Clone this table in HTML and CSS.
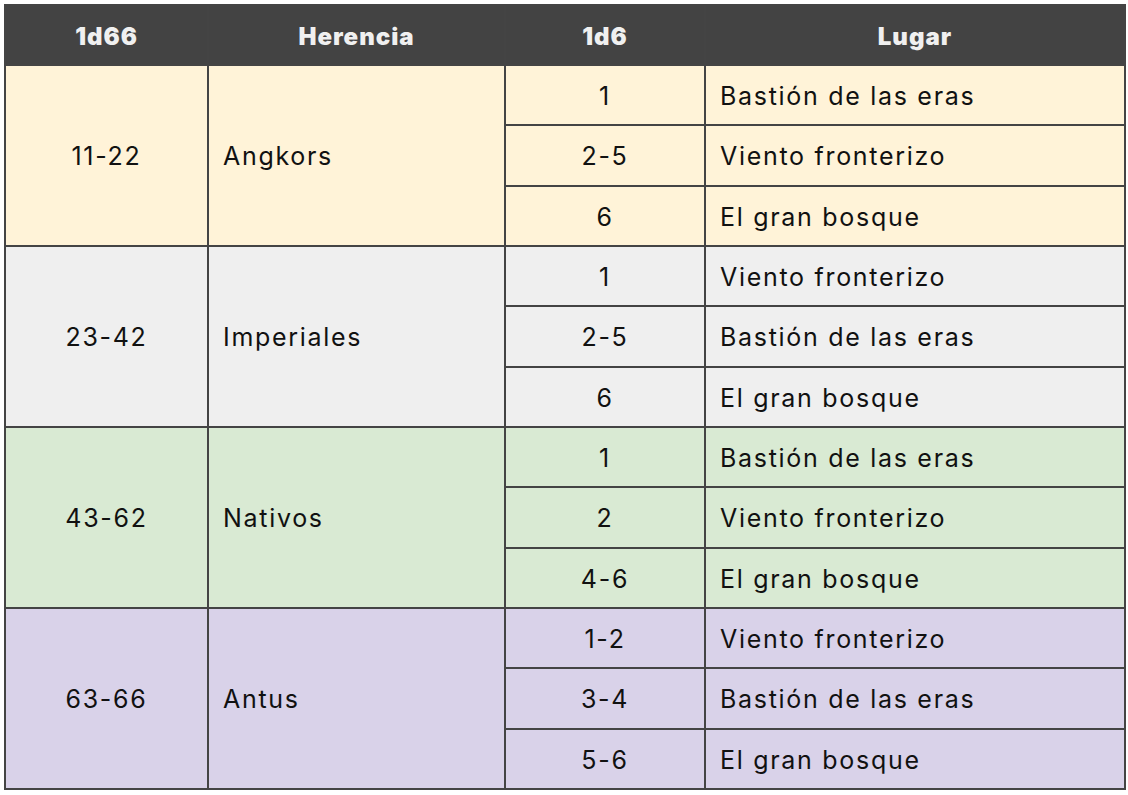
FILE: index.html
```html
<!DOCTYPE html>
<html lang="es">
<head>
<meta charset="utf-8">
<title>Herencia</title>
<link rel="stylesheet" href="styles.css">
</head>
<body>
<div class="wrap">
<table class="tbl">
  <colgroup>
    <col class="c1"><col class="c2"><col class="c3"><col class="c4">
  </colgroup>
  <thead>
    <tr><th>1d66</th><th>Herencia</th><th>1d6</th><th>Lugar</th></tr>
  </thead>
  <tbody class="g-yellow">
    <tr><td class="ctr" rowspan="3">11-22</td><td class="lft" rowspan="3">Angkors</td><td class="ctr">1</td><td class="lft">Bastión de las eras</td></tr>
    <tr><td class="ctr">2-5</td><td class="lft">Viento fronterizo</td></tr>
    <tr><td class="ctr">6</td><td class="lft">El gran bosque</td></tr>
  </tbody>
  <tbody class="g-gray">
    <tr><td class="ctr" rowspan="3">23-42</td><td class="lft" rowspan="3">Imperiales</td><td class="ctr">1</td><td class="lft">Viento fronterizo</td></tr>
    <tr><td class="ctr">2-5</td><td class="lft">Bastión de las eras</td></tr>
    <tr><td class="ctr">6</td><td class="lft">El gran bosque</td></tr>
  </tbody>
  <tbody class="g-green">
    <tr><td class="ctr" rowspan="3">43-62</td><td class="lft" rowspan="3">Nativos</td><td class="ctr">1</td><td class="lft">Bastión de las eras</td></tr>
    <tr><td class="ctr">2</td><td class="lft">Viento fronterizo</td></tr>
    <tr><td class="ctr">4-6</td><td class="lft">El gran bosque</td></tr>
  </tbody>
  <tbody class="g-purple">
    <tr><td class="ctr" rowspan="3">63-66</td><td class="lft" rowspan="3">Antus</td><td class="ctr">1-2</td><td class="lft">Viento fronterizo</td></tr>
    <tr><td class="ctr">3-4</td><td class="lft">Bastión de las eras</td></tr>
    <tr><td class="ctr">5-6</td><td class="lft">El gran bosque</td></tr>
  </tbody>
</table>
</div>
</body>
</html>
```

FILE: styles.css
```css
html, body {
  margin: 0;
  padding: 0;
  background: #ffffff;
}
.wrap {
  padding: 4px;
}
.tbl {
  width: 1120px;
  border-collapse: collapse;
  table-layout: fixed;
  font-family: "Inter", "Liberation Sans", sans-serif;
  color: #111111;
}
.c1 { width: 203px; }
.c2 { width: 297px; }
.c3 { width: 200px; }
.c4 { width: 420px; }
.tbl th, .tbl td {
  border: 2px solid #444444;
}
.tbl th {
  background: #434343;
  color: #f0f0f0;
  font-weight: 900;
  font-size: 24px;
  height: 56px;
  text-align: center;
  padding: 2px 0 0;
  letter-spacing: 1px;
}
.tbl td {
  height: 56.33px;
  font-size: 25px;
  font-weight: 400;
  padding: 2px 14px 0;
  letter-spacing: 1.7px;
}
.ctr { text-align: center; }
.lft { text-align: left; }
.g-yellow td { background: #fff3d8; }
.g-gray td { background: #efefef; }
.g-green td { background: #d9ead3; }
.g-purple td { background: #d9d2e9; }
```
